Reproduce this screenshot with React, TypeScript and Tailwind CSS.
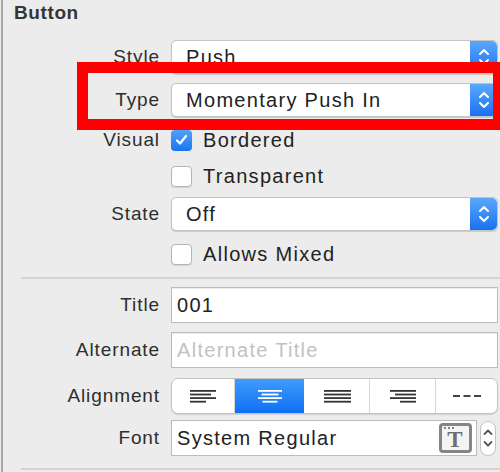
const font = { fontFamily: '"Liberation Sans", Arial, sans-serif' }

function Stepper() {
  return (
    <div className="flex h-full w-[27px] items-center justify-center rounded-r-[5px] bg-gradient-to-b from-[#5aa8fb] to-[#1670f0]">
      <svg width="12" height="20" viewBox="0 0 12 20" fill="none" stroke="white" strokeWidth="2" strokeLinecap="round" strokeLinejoin="round">
        <path d="M2 7 L6 3 L10 7" />
        <path d="M2 13 L6 17 L10 13" />
      </svg>
    </div>
  )
}

function Popup({ value }: { value: string }) {
  return (
    <div className="flex h-[34px] items-stretch rounded-[5px] border border-[#c3c3c3] bg-white shadow-[0_1px_1px_rgba(0,0,0,0.15)]">
      <div className="flex flex-1 items-center pl-[14px] text-[20px] tracking-[1.3px] text-[#222]">{value}</div>
      <Stepper />
    </div>
  )
}

function Check({ checked, label }: { checked?: boolean; label: string }) {
  return (
    <div className="flex h-[24px] items-center">
      {checked ? (
        <div className="flex h-[21px] w-[21px] items-center justify-center rounded-[4px] bg-gradient-to-b from-[#4ea2fb] to-[#1a74ee]">
          <svg width="13" height="12" viewBox="0 0 13 12" fill="none" stroke="white" strokeWidth="2.2" strokeLinecap="round" strokeLinejoin="round">
            <path d="M2 6.5 L5 9.5 L11 2" />
          </svg>
        </div>
      ) : (
        <div className="h-[21px] w-[21px] rounded-[4px] border border-[#b5b5b5] bg-white shadow-[0_1px_1px_rgba(0,0,0,0.1)]" />
      )}
      <span className="ml-[11px] text-[20px] leading-[24px] tracking-[1.3px] text-[#222]">{label}</span>
    </div>
  )
}

function Row({ label, children, className }: { label?: string; children: React.ReactNode; className?: string }) {
  return (
    <div className={`grid grid-cols-[157px_1fr] items-center gap-x-[11px] pr-[2px] ${className ?? ''}`}>
      <div className="text-right text-[19px] leading-[24px] tracking-[0.9px] text-[#2e2e2e]">{label}</div>
      <div>{children}</div>
    </div>
  )
}

function Field({ value, placeholder }: { value?: string; placeholder?: string }) {
  return (
    <div className="flex h-[36px] items-center border border-[#bcbcbc] bg-white pl-[5px] text-[20px] tracking-[1.3px] shadow-[inset_0_1px_1px_rgba(0,0,0,0.08)]">
      {value ? <span className="text-[#222]">{value}</span> : <span className="text-[#c2c2c2]">{placeholder}</span>}
    </div>
  )
}

function Lines({ widths, align, color }: { widths: number[]; align: 'l' | 'c' | 'r'; color: string }) {
  return (
    <svg width="28" height="14" viewBox="0 0 28 14">
      {widths.map((w, i) => {
        const x = align === 'l' ? 1 : align === 'r' ? 27 - w : 14 - w / 2
        return <rect key={i} x={x} y={1 + i * 3.6} width={w} height="1.8" fill={color} />
      })}
    </svg>
  )
}

function Segmented() {
  return (
    <div className="flex h-[36px] overflow-hidden rounded-[7px] border border-[#c3c3c3] bg-white shadow-[0_1px_1px_rgba(0,0,0,0.12)]">
      <div className="flex w-[63px] items-center justify-center border-r border-[#d6d6d6]">
        <Lines widths={[26, 21, 26, 16]} align="l" color="#333" />
      </div>
      <div className="flex w-[69px] items-center justify-center bg-gradient-to-b from-[#3f9cfc] to-[#0c6ef3]">
        <Lines widths={[24, 17, 24, 15]} align="c" color="#fff" />
      </div>
      <div className="flex w-[66px] items-center justify-center border-r border-[#d6d6d6]">
        <Lines widths={[27, 27, 27, 27]} align="l" color="#333" />
      </div>
      <div className="flex w-[66px] items-center justify-center border-r border-[#d6d6d6]">
        <Lines widths={[26, 21, 26, 16]} align="r" color="#333" />
      </div>
      <div className="flex flex-1 items-center justify-center">
        <svg width="28" height="4" viewBox="0 0 28 4">
          <rect x="0" y="1" width="7" height="2" fill="#444" />
          <rect x="10.5" y="1" width="7" height="2" fill="#444" />
          <rect x="21" y="1" width="7" height="2" fill="#444" />
        </svg>
      </div>
    </div>
  )
}

function FontField() {
  return (
    <div className="flex items-center">
      <div className="flex h-[36px] w-[306px] items-center justify-between border border-[#bcbcbc] bg-white pl-[5px] pr-[4px] text-[20px] tracking-[1.3px] text-[#222]">
        <span>System Regular</span>
        <div className="relative flex h-[30px] w-[33px] items-center justify-center rounded-[4px] border-[3px] border-[#858585] bg-[#f4f4f4]">
          <div className="absolute left-[2px] top-[1px] flex gap-[2px]">
            <span className="h-[2px] w-[2px] bg-[#858585]" />
            <span className="h-[2px] w-[2px] bg-[#858585]" />
            <span className="h-[2px] w-[2px] bg-[#858585]" />
          </div>
          <span className="mt-[3px] text-[23px] font-bold leading-none text-[#6e6e6e]" style={{ fontFamily: '"Liberation Serif", serif' }}>T</span>
        </div>
      </div>
      <div className="ml-[3px] flex h-[35px] w-[16px] items-center justify-center rounded-full border border-[#c3c3c3] bg-white">
        <svg width="10" height="24" viewBox="0 0 10 24" fill="none" stroke="#555" strokeWidth="1.8" strokeLinecap="round" strokeLinejoin="round">
          <path d="M1.5 8 L5 4.5 L8.5 8" />
          <path d="M1.5 16 L5 19.5 L8.5 16" />
        </svg>
      </div>
    </div>
  )
}

export default function App() {
  return (
    <div className="relative h-[472px] w-[500px] overflow-hidden bg-[#ececec]" style={font}>
      <div className="ml-px flex h-full flex-col border-l-2 border-[#a9a9a9]">
        <div className="h-[40px] pl-[11px] pt-[2px] text-[19px] font-bold leading-[22px] tracking-[0.6px] text-[#353535]">Button</div>
        <Row label="Style"><Popup value="Push" /></Row>
        <Row label="Type" className="mt-[9px]"><Popup value="Momentary Push In" /></Row>
        <Row label="Visual" className="mt-[11px]"><Check checked label="Bordered" /></Row>
        <Row className="mt-[12px]"><Check label="Transparent" /></Row>
        <Row label="State" className="mt-[9px]"><Popup value="Off" /></Row>
        <Row className="mt-[11px]"><Check label="Allows Mixed" /></Row>
        <div className="ml-[18px] mt-[11px] h-[2px] bg-[#d4d4d4]" />
        <Row label="Title" className="mt-[8px]"><Field value="001" /></Row>
        <Row label="Alternate" className="mt-[9px]"><Field placeholder="Alternate Title" /></Row>
        <Row label="Alignment" className="mt-[10px]"><Segmented /></Row>
        <Row label="Font" className="mt-[6px]"><FontField /></Row>
        <div className="ml-[18px] mt-[12px] h-[2px] bg-[#d4d4d4]" />
      </div>
      <div className="absolute left-[77px] top-[62px] h-[68px] w-[427px] border-[11px] border-[#ff0000]" />
    </div>
  )
}
